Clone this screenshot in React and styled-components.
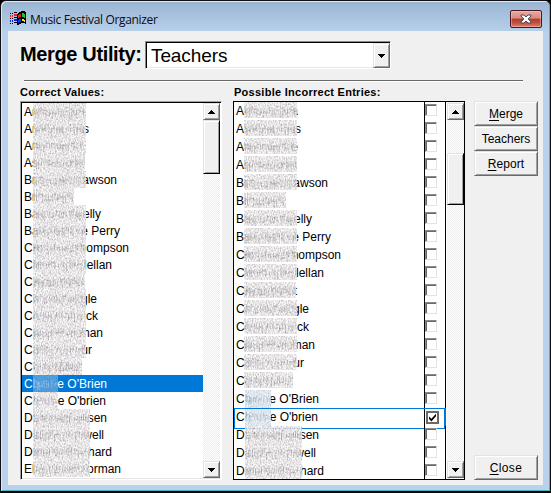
import React from "react";
import styled, { createGlobalStyle, css } from "styled-components";

const Global = createGlobalStyle`
  * { box-sizing: border-box; }
  body { margin: 0; overflow: hidden; background: #000; font-family: "Liberation Sans", Arial, sans-serif; }
`;

const Window = styled.div`
  width: 551px;
  height: 493px;
  border: 1px solid #101014;
  border-bottom: 2px solid #000;
  border-radius: 6px 6px 0 0;
  background: linear-gradient(#99b4d1 0, #a5bfdc 12px, #b9d1ea 32px, #b9d1ea 100%);
  box-shadow: inset 1px 1px 0 #dbe8f5, inset -1px -1px 0 #42b8c4;
  padding: 0 7px;
`;
const TitleBar = styled.header`
  height: 30px;
  display: flex;
  align-items: flex-start;
  padding: 9px 1px 0 2px;
`;
const Title = styled.h1`
  margin: 1px 0 0 3px;
  flex: 1;
  font: 400 12px/18px "Open Sans", "Noto Sans", sans-serif;
  letter-spacing: -0.34px;
  color: #0b0b12;
`;
const TitleClose = styled.button`
  width: 32px;
  height: 18px;
  padding: 0;
  border: 1px solid #4c1420;
  border-radius: 2px;
  display: grid;
  place-items: center;
  background: linear-gradient(#e6aaa2 0, #d98a80 45%, #b83a25 50%, #c2513e 75%, #d68072 100%);
  box-shadow: inset 0 0 0 1px rgba(255, 205, 195, 0.45);
`;
const Client = styled.main`
  width: 535px;
  height: 454px;
  background: #f0f0f0;
  padding: 10px 5px 0 12px;
  color: #000;
`;
const Header = styled.div`
  display: flex;
  height: 28px;
`;
const Heading = styled.label`
  width: 125px;
  white-space: nowrap;
  font: bold 20px/26px "Liberation Sans", Arial, sans-serif;
  letter-spacing: -0.36px;
`;
const Combo = styled.div`
  width: 246px;
  height: 28px;
  display: flex;
  background: #fff;
  border: 1px solid;
  border-color: #8a8a8a #fff #fff #8a8a8a;
  box-shadow: inset 1px 1px 0 #000, inset -1px -1px 0 #e8e8e8;
`;
const ComboValue = styled.span`
  flex: 1;
  padding: 2px 0 0 5px;
  font-size: 19px;
  line-height: 24px;
  letter-spacing: -0.1px;
`;
const raised = css`
  background: #f0f0f0;
  border: 1px solid;
  border-color: #e3e3e3 #696969 #696969 #e3e3e3;
  box-shadow: inset 1px 1px 0 #fff, inset -1px -1px 0 #a0a0a0;
`;
const ArrowButton = styled.div`
  ${raised}
  width: ${(p) => p.$w || 17}px;
  height: ${(p) => p.$h || 17}px;
  margin-top: ${(p) => p.$top || 0}px;
  flex: none;
  display: grid;
  place-items: center;
`;
const Rule = styled.div`
  width: 499px;
  height: 2px;
  margin: 11px 0 0 4px;
  background: #696969;
  border-bottom: 1px solid #fff;
`;
const Columns = styled.div`
  display: grid;
  grid-template-columns: 203px 231px 65px;
  column-gap: 10px;
`;
const Column = styled.section`
  height: 398px;
  display: flex;
  flex-direction: column;
`;
const Label = styled.h2`
  margin: 0 0 0 ${(p) => p.$left || 0}px;
  height: 19px;
  white-space: nowrap;
  font: bold 11px/20px "Liberation Sans", Arial, sans-serif;
  letter-spacing: ${(p) => p.$spacing}px;
`;
const SunkenList = styled.div`
  display: flex;
  width: 202px;
  height: 379px;
  overflow: hidden;
  background: #fff;
  border: 1px solid;
  border-color: #a0a0a0 #fff #fff #a0a0a0;
  box-shadow: inset 1px 1px 0 #000, inset 0 -1px 0 #e3e3e3;
  padding: 1px 1px 1px 1px;
`;
const FlatList = styled.div`
  display: flex;
  width: 232px;
  height: 379px;
  overflow: hidden;
  background: #fff;
  border: 1px solid #000;
`;
const Rows = styled.div`
  flex: 1;
  min-width: 0;
  overflow: hidden;
`;
const Row = styled.div`
  position: relative;
  display: flex;
  height: ${(p) => p.$h}px;
  line-height: ${(p) => (p.$h === 17 ? 19 : 18)}px;
  font-size: 12px;
  color: ${(p) => (p.$selected ? "#fff" : "#000")};
  background: ${(p) => (p.$selected ? "#0078d7" : "transparent")};
  ${(p) =>
    p.$focused &&
    css`
      &::after {
        content: "";
        position: absolute;
        inset: 0 0 0 0;
        height: 19px;
        border: 1px solid #0078d7;
        border-right-width: 2px;
      }
    `}
`;
const Name = styled.div`
  position: relative;
  flex: none;
  display: flex;
  justify-content: space-between;
  white-space: pre;
  margin-left: 2px;
  width: ${(p) => p.$w}px;
`;
const Smudge = styled.svg`
  position: absolute;
  left: ${(p) => p.$x}px;
  top: ${(p) => p.$y || 0}px;
  display: block;
`;
const CheckCell = styled.div`
  flex: none;
  width: 22px;
  height: ${(p) => p.$h}px;
  margin-left: auto;
  border-left: 1px solid #000;
  border-right: 1px solid #000;
  padding: ${(p) => (p.$checked ? "3px 0 0 1px" : "2px 0 0 0")};
`;
const Check = styled.div`
  width: 12px;
  height: 12px;
  background: #fff;
  border: 1px solid;
  border-color: #8a8a8a #e3e3e3 #e3e3e3 #8a8a8a;
  box-shadow: inset 1px 1px 0 #696969;
  ${(p) =>
    p.$checked &&
    css`
      width: 13px;
      height: 13px;
      border: 2px solid #696969;
      box-shadow: none;
    `}
  svg { display: block; }
`;
const ScrollBar = styled.div`
  flex: none;
  width: 17px;
  display: flex;
  flex-direction: column;
  background: repeating-conic-gradient(#ededed 0 25%, #fff 0 50%) 0 0 / 2px 2px;
  margin-left: ${(p) => p.$left || 0}px;
  padding: ${(p) => p.$pad || 0}px 0;
`;
const Thumb = styled.div`
  ${raised}
  height: ${(p) => p.$h}px;
  margin-top: ${(p) => p.$top}px;
  margin-bottom: auto;
  border-right-color: #000;
  border-bottom-color: #000;
`;
const Actions = styled.div`
  display: flex;
  flex-direction: column;
  padding-top: 19px;
  height: 398px;
`;
const ActionButton = styled.button`
  ${raised}
  width: 64px;
  height: 25px;
  padding: 1px 0 0;
  margin-top: ${(p) => (p.$last ? "auto" : "0")};
  font: 12px/20px "Liberation Sans", Arial, sans-serif;
  letter-spacing: ${(p) => p.$spacing || 0}px;
  white-space: nowrap;
  u { text-underline-offset: 2px; }
`;

const Arrow = ({ up }) => (
  <svg width="7" height="4" viewBox="0 0 7 4" shapeRendering="crispEdges">
    <path d={up ? "M3 0h1v1h1v1h1v1h1v1H0V3h1V2h1V1h1z" : "M0 0h7v1H6v1H5v1H4v1H3V3H2V2H1V1H0z"} />
  </svg>
);

const FlagIcon = () => (
  <svg width="17" height="16" viewBox="0 0 17 16" shapeRendering="crispEdges">
    <path d="M7 4h1V3h1V2h2V1h4v1h1v12h-1v-1h-4v1H9v1H7z" fill="#000" />
    <path d="M0 3h1v1H0zM2 3h1v1H2zM4 2h3v1H4zM0 8h1v1H0zM2 8h1v1H2zM4 7h3v1H4zM0 13h1v1H0zM2 13h1v1H2zM4 12h3v1H4z" fill="#000" />
    <path d="M0 5h1v2H0zM2 5h1v2H2zM4 4h3v2H4z" fill="#e8202c" />
    <path d="M0 10h1v2H0zM2 10h1v2H2zM4 9h3v2H4z" fill="#1a22d8" />
    <path d="M8 5h1V4h2v3H9v1H8z" fill="#f01818" />
    <path d="M12 3h2v1h1v4h-1V7h-2z" fill="#10c828" />
    <path d="M8 10h1V9h2v3H9v1H8z" fill="#1830f0" />
    <path d="M12 9h2v1h1v2h-1v-1h-2z" fill="#f4e818" />
  </svg>
);

const CloseGlyph = () => (
  <svg width="12" height="10" viewBox="0 0 12 10">
    <path d="M1 1h3l2 2 2-2h3v1L8.2 5 11 8v1H8L6 7 4 9H1V8l2.8-3L1 2z" fill="#fff" stroke="#464a5c" strokeWidth="1" />
  </svg>
);

/* Broken upright strokes under a fine grain cover the hidden part of a name. */
function strokes(width, seed) {
  let s = seed * 7919 + 13;
  const rnd = () => (s = (s * 16807) % 2147483647) / 2147483647;
  let d = "";
  for (let x = 1; x < width - 1; x += 1.6 + rnd() * 2.2) {
    const y = 4 + rnd() * 4;
    d += `M${x.toFixed(1)} ${y.toFixed(1)}v${(4 + rnd() * 5).toFixed(1)}`;
    if (rnd() > 0.5) d += `M${x.toFixed(1)} ${(6 + rnd() * 7).toFixed(1)}h${(2 + rnd() * 2.5).toFixed(1)}`;
  }
  return d;
}

function Redaction({ x, width, height, seed, tone }) {
  const base = { blue: "#3c94dc", pale: "#d8e8f5", plain: "#f3f1f1" }[tone];
  const ink = { blue: "#8cc2ec", pale: "#8da6bd", plain: "#7e787a" }[tone];
  const id = `grain-${tone}-${height}-${seed}`;
  return (
    <Smudge $x={x} width={width} height={height} viewBox={`0 0 ${width} ${height}`} aria-hidden="true">
      <filter id={id} x="0" y="0" width="100%" height="100%" colorInterpolationFilters="sRGB">
        <feTurbulence type="fractalNoise" baseFrequency="0.85 0.5" numOctaves="2" seed={seed} />
        <feColorMatrix values="1 .12 0 0 .3  1 0 0 0 .35  1 0 .12 0 .3  0 0 0 0 1" />
      </filter>
      <rect width={width} height={height} fill={base} opacity=".76" />
      <path d={strokes(width, seed)} stroke={ink} strokeWidth="1" opacity=".6" fill="none" />
      <rect width={width} height={height} filter={`url(#${id})`} opacity={tone === "blue" ? 0.2 : tone === "pale" ? 0.35 : 0.5} />
    </Smudge>
  );
}

/* [visible start, visible end, right edge of the name, right edge of the smudge] */
const correct = [
  ["An", "", 62, 62], ["An", "is", 65, 62], ["An", "", 62, 62], ["As", "", 60, 61],
  ["Br", "awson", 93, 62], ["Br", "", 50, 50], ["Ba", "elly", 77, 62], ["Ba", "e Perry", 96, 62],
  ["Ch", "hompson", 105, 62], ["Ch", "lellan", 88, 62], ["Ch", "", 61, 61], ["Ch", "gle", 73, 62],
  ["Ch", "ck", 74, 62], ["Ch", "man", 79, 62], ["Ch", "ur", 68, 62], ["Ch", "Zhu", 54, 58],
  ["Ch", "e O'Brien", 83, 34], ["Ch", "e O'brien", 82, 34], ["Da", "sen", 83, 66],
  ["Da", "well", 80, 66], ["Da", "hard", 88, 66], ["El", "orman", 97, 66],
];
const possible = [
  ["An", "a", 62, 61], ["An", "is", 65, 61], ["An", "e", 62, 61], ["An", "", 61, 61],
  ["Br", "awson", 92, 61], ["Br", "", 50, 50], ["Ba", "elly", 76, 61], ["Ba", "e Perry", 95, 61],
  ["Ch", "hompson", 105, 61], ["Ch", "lellan", 88, 61], ["Ch", "t", 61, 60], ["Ch", "gle", 73, 61],
  ["Ch", "ck", 73, 61], ["Ch", "man", 79, 61], ["Ch", "ur", 68, 61], ["Ch", "", 57, 57],
  ["Ch", "e O'Brien", 83, 35], ["Ch", "e O'brien", 82, 35], ["Da", "sen", 83, 66],
  ["Da", "well", 80, 66], ["Da", "hard", 88, 66],
];

function Person({ data, index, height, tone, start }) {
  const [first, last, width, end] = data;
  return (
    <Name $w={width}>
      <span>{first}</span>
      <span>{last}</span>
      <Redaction x={start} width={end - start} height={height} seed={index + 1} tone={tone} />
    </Name>
  );
}

export default function App() {
  return (
    <Window>
      <Global />
      <TitleBar>
        <FlagIcon />
        <Title>Music Festival Organizer</Title>
        <TitleClose aria-label="Close window"><CloseGlyph /></TitleClose>
      </TitleBar>
      <Client>
        <Header>
          <Heading>Merge Utility:</Heading>
          <Combo>
            <ComboValue>Teachers</ComboValue>
            <ArrowButton $w={17} $h={25} $top={1}><Arrow /></ArrowButton>
          </Combo>
        </Header>
        <Rule />
        <Columns>
          <Column>
            <Label $spacing={0.24}>Correct Values:</Label>
            <SunkenList>
              <Rows>
                {correct.map((p, i) => (
                  <Row key={i} $h={17} $selected={i === 16}>
                    <Person data={p} index={i} height={17} start={9} tone={i === 16 ? "blue" : "plain"} />
                  </Row>
                ))}
              </Rows>
              <ScrollBar>
                <ArrowButton><Arrow up /></ArrowButton>
                <Thumb $h={54} $top={0} />
                <ArrowButton><Arrow /></ArrowButton>
              </ScrollBar>
            </SunkenList>
          </Column>
          <Column>
            <Label $spacing={0.27} $left={1}>Possible Incorrect Entries:</Label>
            <FlatList>
              <Rows>
                {possible.map((p, i) => (
                  <Row key={i} $h={18} $focused={i === 17}>
                    <Person data={p} index={i} height={i > 15 ? 18 : 16} start={i > 15 ? 9 : 8} tone={i === 16 || i === 17 ? "pale" : "plain"} />
                    <CheckCell $h={18} $checked={i === 17}>
                      <Check $checked={i === 17}>
                        {i === 17 && (
                          <svg width="9" height="9" viewBox="0 0 9 9">
                            <path d="M1 3.5v2.4L3.4 8.4 8 3.2V.8L3.4 5.8z" />
                          </svg>
                        )}
                      </Check>
                    </CheckCell>
                  </Row>
                ))}
              </Rows>
              <ScrollBar $left={1} $pad={1}>
                <ArrowButton><Arrow up /></ArrowButton>
                <Thumb $h={52} $top={33} />
                <ArrowButton><Arrow /></ArrowButton>
              </ScrollBar>
            </FlatList>
          </Column>
          <Actions>
            <ActionButton><u>M</u>erge</ActionButton>
            <ActionButton>Teachers</ActionButton>
            <ActionButton $spacing={0.1}><u>R</u>eport</ActionButton>
            <ActionButton $last $spacing={0.4}><u>C</u>lose</ActionButton>
          </Actions>
        </Columns>
      </Client>
    </Window>
  );
}
